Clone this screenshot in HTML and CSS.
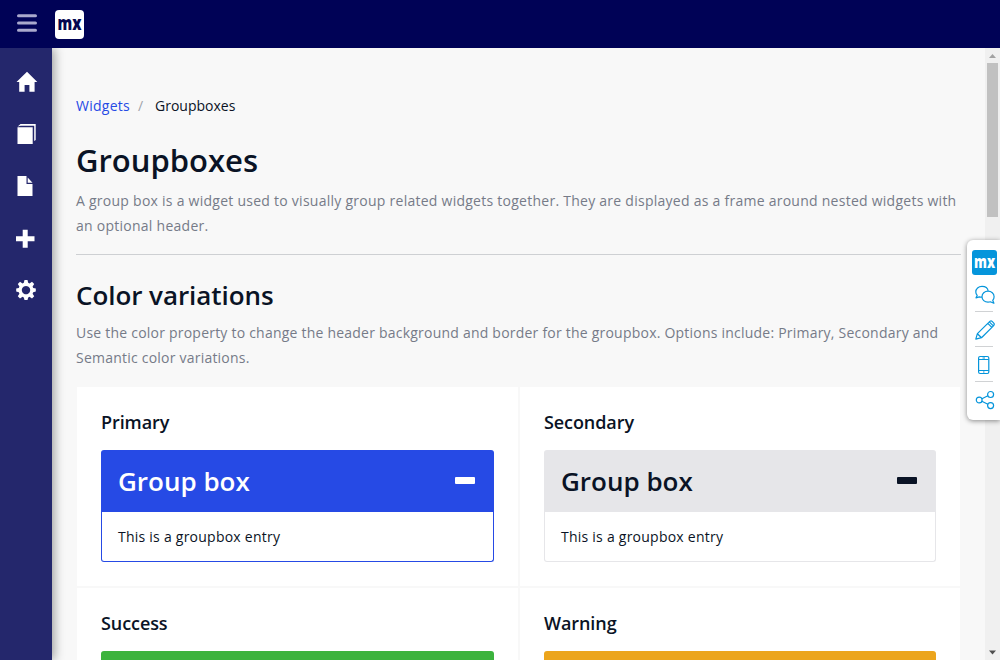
FILE: index.html
```html
<!DOCTYPE html>
<html lang="en">
<head>
<meta charset="utf-8">
<title>Groupboxes</title>
<link rel="stylesheet" href="styles.css">
</head>
<body>
<div class="app">
  <header class="topbar">
    <svg class="menu-icon" width="20" height="18" viewBox="0 0 20 18"><path d="M1.5 1.8h17M1.5 9h17M1.5 16.2h17" stroke="#a9a9cd" stroke-width="3" stroke-linecap="round"/></svg>
    <svg class="logo" width="29" height="29" viewBox="0 0 29 29"><rect width="29" height="29" rx="4" fill="#fff"/><text class="logo-text" x="2.500" y="20" textLength="24" lengthAdjust="spacingAndGlyphs" fill="#05064f">mx</text></svg>
  </header>
  <div class="workspace">
    <nav class="sidebar">
      <svg width="22" height="22" viewBox="0 0 22 22"><path d="M11 0.8L21.3 11H18.6V20.8H13.4V14H8.6V20.8H3.2V11H.5Z" fill="#fff"/></svg>
      <svg width="22" height="22" viewBox="0 0 22 22"><path d="M1.5 4.2h15.2V21H1.5ZM1.7 3.5L4.5 1h15.2v16l-1.500 1V2.700H4.700Z" fill="#fff"/></svg>
      <svg width="22" height="22" viewBox="0 0 22 22"><path d="M1.500 1h9v8h6v12h-15ZM11.700 2.500v5.300h4.800Z" fill="#fff"/></svg>
      <svg width="22" height="22" viewBox="0 0 22 22"><path d="M6.700 2.700h5v6.500h6.800v5h-6.800v6.500h-5v-6.500H0v-5h6.700Z" fill="#fff"/></svg>
      <svg width="22" height="22" viewBox="0 0 22 22"><path d="M8.500 1h3l.7 2.800 1.300.6 2.500-1.600 2.200 2.200-1.600 2.500.6 1.400 2.600.700v3l-2.600.700-.6 1.400 1.600 2.500-2.200 2.200-2.500-1.600-1.300.6-.7 2.600h-3l-.7-2.600-1.300-.6L4 19.400l-2.200-2.200 1.600-2.500-.6-1.400L.2 12.600v-3l2.600-.7.6-1.400L1.800 5 4 2.800l2.500 1.600 1.300-.6ZM10 6.900a4.200 4.200 0 1 0 .01 0Z" fill="#fff" fill-rule="evenodd"/></svg>
    </nav>
    <main class="page">
      <div class="breadcrumb"><a class="crumb-link">Widgets</a><span class="crumb-divider">/</span><span>Groupboxes</span></div>
      <section class="page-header">
        <h1 class="page-title">Groupboxes</h1>
        <p class="description intro">A group box is a widget used to visually group related widgets together. They are displayed as a frame around nested widgets with an optional header.</p>
      </section>
      <h2 class="section-title">Color variations</h2>
      <p class="description">Use the color property to change the header background and border for the groupbox. Options include: Primary, Secondary and Semantic color variations.</p>
      <div class="cards">
        <article class="card"><h4 class="card-title">Primary</h4>
          <div class="groupbox primary"><div class="groupbox-header">Group box<i class="minus"></i></div><div class="groupbox-body">This is a groupbox entry</div></div></article>
        <article class="card"><h4 class="card-title">Secondary</h4>
          <div class="groupbox secondary"><div class="groupbox-header">Group box<i class="minus"></i></div><div class="groupbox-body">This is a groupbox entry</div></div></article>
        <article class="card"><h4 class="card-title">Success</h4>
          <div class="groupbox success"><div class="groupbox-header"></div></div></article>
        <article class="card"><h4 class="card-title">Warning</h4>
          <div class="groupbox warning"><div class="groupbox-header"></div></div></article>
      </div>
    </main>
    <div class="scrollbar">
      <svg width="15" height="15" viewBox="0 0 15 15"><path d="M7.500 6L11 10H4Z" fill="#a2a2a2"/></svg>
      <div class="thumb"></div>
      <svg class="scroll-down" width="15" height="15" viewBox="0 0 15 15"><path d="M4 5.500h7L7.500 9.500Z" fill="#505050"/></svg>
    </div>
  </div>
  <aside class="feedback">
    <svg class="feedback-logo" width="25" height="25" viewBox="0 0 25 25"><rect width="25" height="25" rx="3" fill="#0595db"/><text class="logo-text small" x="2" y="17.500" textLength="21" lengthAdjust="spacingAndGlyphs" fill="#fff">mx</text></svg>
    <div class="tool"><svg width="20" height="20" viewBox="0 0 20 20"><path d="M7.200 12.100c-1 .200-2 .100-2.900-.200L1 12.800l1.200-2.400C1.300 9.500.8 8.300.8 7 .8 3.900 3.500 1.400 7 1.400c3.200 0 5.800 2 6.200 4.700M13 6.200c-3.400 0-6 2.400-6 5.500s2.600 5.500 6 5.500c.8 0 1.600-.1 2.300-.4l3.600 1.500-1.200-3c.9-1 1.400-2.200 1.400-3.600 0-3.100-2.700-5.500-6.100-5.500Z"/></svg></div>
    <div class="tool"><svg width="20" height="20" viewBox="0 0 20 20"><path d="M.8 19.200l1.600-5.500L13.800 2.300c1.200-1.300 2.300-1.800 3.300-.9l1.700 1.700c.8.900.4 2-.6 3L6.500 17.700ZM2.400 13.700l4.100 4M12.800 3.300l4 4M14.300 1.900l4 4"/></svg></div>
    <div class="tool"><svg width="20" height="20" viewBox="0 0 20 20"><rect x="3.600" y="1.500" width="10.200" height="17" rx="1.500"/><path d="M3.600 4.500h10.200M3.600 15.500h10.200M7.500 3h2.500M8 17h1.500"/></svg></div>
    <div class="tool"><svg width="20" height="20" viewBox="0 0 20 20"><circle cx="4.200" cy="10" r="2.900"/><circle cx="15.600" cy="4.500" r="3"/><circle cx="15.600" cy="15.600" r="3"/><path d="M6.900 8.700l6-2.900M6.800 11.300l6.100 3"/></svg></div>
  </aside>
</div>
</body>
</html>
```
FILE: styles.css
```css
* { box-sizing: border-box; }
body { margin: 0; font: 14px/20px "Open Sans", sans-serif; color: #0a1325; overflow: hidden; }
h1, h2, h4, p { margin: 0; font-weight: 600; }
svg { display: block; flex: none; overflow: visible; }
.app { position: relative; height: 660px; overflow: hidden; display: flex; flex-direction: column; }
.topbar { height: 48px; flex: none; display: flex; align-items: center; gap: 18px; padding: 0 17px; background: #000256; }
.menu-icon { margin-top: -2px; }
.logo-text { font: 800 20px "Open Sans", sans-serif; }
.logo-text.small { font-size: 17px; }
.workspace { height: 612px; display: flex; }
.sidebar { width: 52px; flex: none; z-index: 1; background: #24276c; box-shadow: 2px 0 10px rgba(0,0,0,.38); padding: 23px 0 0 16px; display: flex; flex-direction: column; gap: 30px; clip-path: inset(0 -20px 0 0); }
.page { width: 933px; flex: none; background: #f8f8f8; padding: 48px 24px 0; overflow: hidden; }
.breadcrumb { display: flex; }
.crumb-link { color: #264ae5; letter-spacing: .25px; }
.crumb-divider { color: #a0a3aa; padding: 0 12px 0 8px; }
.page-header { margin-top: 24px; padding-bottom: 16px; border-bottom: 1px solid #ced0d3; }
.page-title { font-size: 31px; line-height: 40px; margin-bottom: 8px; }
.section-title { font-size: 26px; line-height: 34px; margin: 23px 0 8px; letter-spacing: -.06px; }
.description { font-weight: 400; line-height: 25px; letter-spacing: .22px; color: #767b88; }
.intro { letter-spacing: .257px; }
.cards { display: grid; grid-template-columns: 1fr 1fr; margin-top: 16px; }
.card { height: 201px; padding: 23px 24px 24px; border: 1px solid #f8f8f8; background: #fff; }
.card:nth-child(even) { padding-left: 24.5px; }
.card-title { font-size: 18px; line-height: 24px; margin-bottom: 16px; letter-spacing: -.08px; }
.groupbox-header { height: 62px; padding: 0 19px 0 17px; display: flex; align-items: center; justify-content: space-between; font-size: 26px; font-weight: 600; border-radius: 3px 3px 0 0; background: var(--tone); }
.groupbox-body { height: 50px; padding: 15px 16px; letter-spacing: .24px; border: 1px solid var(--tone); border-top: 0; border-radius: 0 0 3px 3px; }
.primary { --tone: #264ae5; }
.primary .groupbox-header { color: #fff; }
.secondary { --tone: #e6e6e9; }
.success { --tone: #3cb33d; }
.warning { --tone: #eca51c; }
.minus { width: 20px; height: 7px; border-radius: 1px; margin-top: -1px; background: currentColor; }
.scrollbar { width: 15px; flex: none; background: #f0f0f0; display: flex; flex-direction: column; }
.thumb { width: 11px; height: 154px; margin-left: 2px; background: #c1c1c1; }
.scroll-down { margin-top: auto; }
.feedback { position: absolute; z-index: 2; right: 0; top: 240px; width: 33px; height: 180px; background: #fff; border-radius: 6px 0 0 6px; box-shadow: 0 1px 5px rgba(0,0,0,.45); padding: 10px 0 0 5px; }
.feedback-logo { margin-bottom: 2px; }
.tool { width: 18px; height: 35px; padding-top: 2px; margin-left: 3px; display: flex; align-items: center; border-bottom: 1px solid #d0d2d4; }
.tool:last-child { border: 0; padding-top: 0; }
.tool svg { fill: none; stroke: #0595db; stroke-width: 1.2; stroke-linejoin: round; }
```
